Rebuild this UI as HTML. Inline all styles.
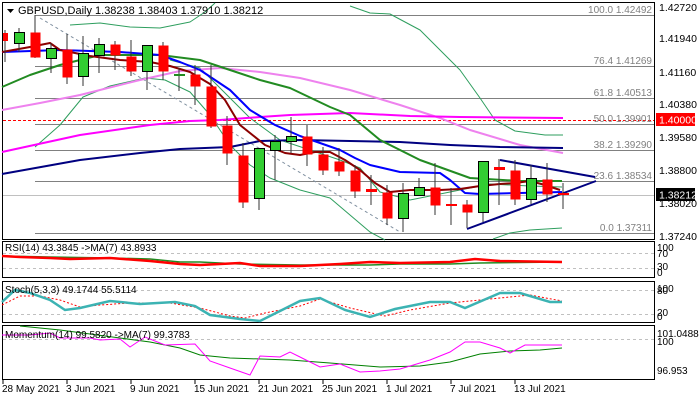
<!DOCTYPE html>
<html><head><meta charset="utf-8"><style>
html,body{margin:0;padding:0;background:#fff;}
svg{display:block;font-family:"Liberation Sans",Tahoma,sans-serif;}
</style></head><body>
<svg width="700" height="400" viewBox="0 0 700 400" xmlns="http://www.w3.org/2000/svg">
<rect width="700" height="400" fill="#fff"/>
<g fill="none" stroke="#000" stroke-width="1">
<rect x="2.5" y="2.5" width="652" height="237"/>
<rect x="2.5" y="241.5" width="652" height="36"/>
<rect x="2.5" y="281.5" width="652" height="41"/>
<rect x="2.5" y="325.5" width="652" height="54"/>
</g>
<g stroke="#808080" stroke-width="1">
<line x1="35" y1="15.5" x2="654" y2="15.5"/>
<line x1="35" y1="66.5" x2="654" y2="66.5"/>
<line x1="35" y1="98.5" x2="654" y2="98.5"/>
<line x1="35" y1="124.5" x2="654" y2="124.5"/>
<line x1="35" y1="150.5" x2="654" y2="150.5"/>
<line x1="35" y1="181.5" x2="654" y2="181.5"/>
<line x1="35" y1="233.5" x2="654" y2="233.5"/>
</g>
<line x1="3" y1="195.5" x2="654" y2="195.5" stroke="#c0c0c0"/>
<line x1="3" y1="120.5" x2="654" y2="120.5" stroke="#f00" stroke-dasharray="3,2"/>
<g font-size="10" fill="#808080" text-anchor="end">
<text x="652" y="13">100.0 1.42492</text>
<text x="652" y="64">76.4 1.41269</text>
<text x="652" y="96">61.8 1.40513</text>
<text x="652" y="122">50.0 1.39901</text>
<text x="652" y="148">38.2 1.39290</text>
<text x="652" y="179">23.6 1.38534</text>
<text x="652" y="231">0.0 1.37311</text>
</g>
<line x1="40" y1="18" x2="400" y2="232" stroke="#8090a0" stroke-dasharray="3,3"/>
<g fill="none" stroke-linejoin="round">
<polyline stroke="#2e9e5e" stroke-width="1" points="70,25 100,23 130,27 160,28 190,22 205,12 215,3"/>
<polyline stroke="#2e9e5e" stroke-width="1" points="350,6 370,13 390,14 420,30 440,50 460,70 480,98 495,120 515,131 545,135 563,135"/>
<polyline stroke="#2e9e5e" stroke-width="1" points="35,147 60,125 83,97 110,86 145,78 165,80 190,92 210,115 230,145 250,165 270,178 300,190 330,198 350,215 370,232 385,240"/>
<polyline stroke="#2e9e5e" stroke-width="1" points="493,239 510,233 530,230 562,228"/>
<polyline stroke="#2e9e5e" stroke-width="1" points="170,60 200,68 220,88 250,118 280,140 310,150 340,160 360,168 380,192 410,200 450,192 490,184 530,186 562,187"/>
<polyline stroke="#ee82ee" stroke-width="2" points="2,110 40,103 80,95 140,80 180,71 220,68 260,72 300,78 350,90 400,105 440,118 470,130 520,145 563,153"/>
<polyline stroke="#ff00ff" stroke-width="2" points="2,152 80,135 150,125 190,121 220,120 260,117 290,115 350,113 410,116 460,117 563,118"/>
<polyline stroke="#000080" stroke-width="2" points="2,174 80,160 140,153 180,149 230,147 260,141 300,140 350,141 400,142 450,145 500,147 563,148"/>
<polyline stroke="#228b22" stroke-width="2" points="2,87 30,75 60,65 100,55 160,55 200,60 230,70 260,80 290,88 330,107 350,115 380,140 420,160 470,178 520,181 562,181"/>
<polyline stroke="#0000ff" stroke-width="2" points="2,52 60,50 120,52 160,55 180,62 200,70 230,90 250,110 275,125 300,136 340,150 355,158 370,165 400,172 440,173 450,180 465,193 480,194 520,193 562,192"/>
<polyline stroke="#8b0000" stroke-width="2" points="2,52 30,47 50,43 60,50 90,56 120,60 150,62 170,66 190,72 210,84 225,100 240,125 265,145 285,153 300,155 315,152 330,152 345,160 360,170 375,183 390,192 410,190 440,190 460,189 480,186 500,184 515,183 530,181 545,185 560,190"/>
<polyline stroke="#000080" stroke-width="2" points="500,160 595,177"/>
<polyline stroke="#000080" stroke-width="2" points="467,229 596,181"/>
</g>
<g stroke="#333" stroke-width="1">
<line x1="5" y1="30" x2="5" y2="62"/><line x1="19" y1="28" x2="19" y2="52"/><line x1="35" y1="15" x2="35" y2="58"/><line x1="51" y1="43" x2="51" y2="73"/><line x1="67" y1="34" x2="67" y2="84"/><line x1="83" y1="36" x2="83" y2="86"/><line x1="99" y1="38" x2="99" y2="73"/><line x1="115" y1="41" x2="115" y2="70"/><line x1="131" y1="40" x2="131" y2="76"/><line x1="147" y1="45" x2="147" y2="90"/><line x1="163" y1="42" x2="163" y2="80"/><line x1="179" y1="68" x2="179" y2="91"/><line x1="195" y1="65" x2="195" y2="105"/><line x1="211" y1="65" x2="211" y2="128"/><line x1="227" y1="116" x2="227" y2="165"/><line x1="243" y1="143" x2="243" y2="208"/><line x1="259" y1="148" x2="259" y2="210"/><line x1="275" y1="135" x2="275" y2="180"/><line x1="291" y1="117" x2="291" y2="153"/><line x1="307" y1="125" x2="307" y2="166"/><line x1="323" y1="147" x2="323" y2="175"/><line x1="339" y1="148" x2="339" y2="176"/><line x1="355" y1="165" x2="355" y2="198"/><line x1="371" y1="175" x2="371" y2="205"/><line x1="387" y1="185" x2="387" y2="225"/><line x1="403" y1="183" x2="403" y2="232"/><line x1="419" y1="178" x2="419" y2="196"/><line x1="435" y1="163" x2="435" y2="215"/><line x1="451" y1="188" x2="451" y2="225"/><line x1="467" y1="200" x2="467" y2="228"/><line x1="483" y1="161" x2="483" y2="222"/><line x1="499" y1="159" x2="499" y2="205"/><line x1="515" y1="160" x2="515" y2="205"/><line x1="531" y1="165" x2="531" y2="204"/><line x1="547" y1="163" x2="547" y2="202"/><line x1="563" y1="183" x2="563" y2="209"/>
</g>
<g stroke="#000" stroke-width="1">
<rect x="3" y="33" width="5" height="8" fill="#f00" stroke="none"/>
<rect x="14.5" y="32.5" width="10" height="11" fill="#32cd32"/>
<rect x="30.5" y="32.5" width="10" height="25" fill="#f00" stroke="none"/>
<rect x="46.5" y="48.5" width="10" height="10" fill="#32cd32"/>
<rect x="62.5" y="49.5" width="10" height="28" fill="#f00" stroke="none"/>
<rect x="78.5" y="53.5" width="10" height="23" fill="#32cd32"/>
<rect x="94.5" y="44.5" width="10" height="11" fill="#32cd32"/>
<rect x="110.5" y="44.5" width="10" height="11" fill="#f00" stroke="none"/>
<rect x="126.5" y="56.5" width="10" height="15" fill="#f00" stroke="none"/>
<rect x="142.5" y="45.5" width="10" height="26" fill="#32cd32"/>
<rect x="158.5" y="45.5" width="10" height="26" fill="#f00" stroke="none"/>
<rect x="174" y="74" width="11" height="2" fill="#228b22" stroke="none"/>
<rect x="190.5" y="74.5" width="10" height="12" fill="#f00" stroke="none"/>
<rect x="206.5" y="86.5" width="10" height="40" fill="#f00" stroke="none"/>
<rect x="222.5" y="125.5" width="10" height="28" fill="#f00" stroke="none"/>
<rect x="238.5" y="155.5" width="10" height="47" fill="#f00" stroke="none"/>
<rect x="254.5" y="148.5" width="10" height="50" fill="#32cd32"/>
<rect x="270.5" y="141.5" width="10" height="9" fill="#32cd32"/>
<rect x="286.5" y="136.5" width="10" height="5" fill="#32cd32"/>
<rect x="302.5" y="136.5" width="10" height="18" fill="#f00" stroke="none"/>
<rect x="318.5" y="154.5" width="10" height="16" fill="#f00" stroke="none"/>
<rect x="334.5" y="161.5" width="10" height="10" fill="#f00" stroke="none"/>
<rect x="350.5" y="170.5" width="10" height="21" fill="#f00" stroke="none"/>
<rect x="366" y="189" width="11" height="3" fill="#f00" stroke="none"/>
<rect x="382.5" y="192.5" width="10" height="26" fill="#f00" stroke="none"/>
<rect x="398.5" y="193.5" width="10" height="25" fill="#32cd32"/>
<rect x="414.5" y="187.5" width="10" height="8" fill="#32cd32"/>
<rect x="430.5" y="187.5" width="10" height="18" fill="#f00" stroke="none"/>
<rect x="446" y="204" width="11" height="2" fill="#f00" stroke="none"/>
<rect x="462.5" y="204.5" width="10" height="8" fill="#f00" stroke="none"/>
<rect x="478.5" y="161.5" width="10" height="51" fill="#32cd32"/>
<rect x="494" y="167" width="11" height="3" fill="#f00" stroke="none"/>
<rect x="510.5" y="170.5" width="10" height="29" fill="#f00" stroke="none"/>
<rect x="526.5" y="178.5" width="10" height="21" fill="#32cd32"/>
<rect x="542.5" y="179.5" width="10" height="15" fill="#f00" stroke="none"/>
<rect x="558" y="193" width="11" height="2" fill="#f00" stroke="none"/>
</g>
<path d="M7,9 L14,9 L10.5,13 Z" fill="#000"/>
<text x="18" y="14" font-size="11" fill="#000">GBPUSD,Daily  1.38238 1.38403 1.37910 1.38212</text>
<g font-size="10.5" fill="#000">
<text x="659" y="11">1.42720</text>
<text x="659" y="42">1.41940</text>
<text x="659" y="76">1.41160</text>
<text x="659" y="108">1.40380</text>
<text x="659" y="141">1.39580</text>
<text x="659" y="174">1.38800</text>
<text x="659" y="207">1.38020</text>
<text x="659" y="240">1.37240</text>
</g>
<rect x="656" y="113" width="39" height="13" fill="#f00"/>
<text x="659" y="123.5" font-size="10.5" fill="#fff">1.40000</text>
<rect x="656" y="188" width="39" height="13" fill="#000"/>
<text x="659" y="198.5" font-size="10.5" fill="#fff">1.38212</text>
<g stroke="#c0c0c0" stroke-dasharray="3,3"><line x1="3" y1="253.5" x2="654" y2="253.5"/><line x1="3" y1="268.5" x2="654" y2="268.5"/>
<line x1="3" y1="290.5" x2="654" y2="290.5"/><line x1="3" y1="314.5" x2="654" y2="314.5"/><line x1="3" y1="339.5" x2="654" y2="339.5"/></g>
<polyline fill="none" stroke="#228b22" stroke-width="1.5" points="2,256 50,257 110,258 150,259 180,262 200,262 240,264 300,265 340,265 370,265 400,264 450,264 480,263 562,262"/>
<polyline fill="none" stroke="#f00" stroke-width="2.5" points="2,256 20,257 50,258 70,259 110,258 150,261 180,264 200,265 240,263 260,266 300,266 340,264 370,262 400,263 450,262 475,259 500,261 562,262"/>
<text x="5" y="251" font-size="10" fill="#000">RSI(14) 43.3845  -&gt;MA(7) 43.8933</text>
<polyline fill="none" stroke="#f00" stroke-width="1" stroke-dasharray="2,2" points="2,305 20,296 40,296 60,300 80,307 100,305 130,303 170,303 200,308 230,316 245,318 265,313 300,306 320,299 350,308 385,316 410,310 450,303 490,299 530,295 562,301"/>
<polyline fill="none" stroke="#3cb3b3" stroke-width="2.5" points="2,302 15,290 30,293 50,300 65,310 80,308 110,301 140,304 175,302 195,306 210,315 240,319 260,321 280,311 300,301 320,298 345,310 370,317 395,309 430,302 450,302 465,308 500,293 520,293 550,302 562,302"/>
<text x="5" y="293" font-size="10" fill="#000">Stoch(5,3,3) 49.1744 55.5114</text>
<polyline fill="none" stroke="#008000" stroke-width="1" points="20,326 60,330 120,338 150,342 180,348 200,355 230,358 290,360 330,363 380,367 420,366 450,362 480,354 510,351 540,350 562,348"/>
<polyline fill="none" stroke="#ff00ff" stroke-width="1" points="2,335 30,335 50,333 60,338 90,338 100,340 120,339 130,347 145,337 165,345 195,344 210,361 230,368 250,375 260,356 280,357 290,352 300,357 320,367 340,364 360,372 380,371 400,369 430,360 450,352 465,342 480,342 500,348 510,353 525,345 562,345"/>
<text x="5" y="338" font-size="10" fill="#000">Momentum(14) 99.5820  -&gt;MA(7) 99.3783</text>
<g font-size="10" fill="#000">
<text x="657" y="251">100</text><text x="657" y="257">70</text><text x="657" y="270">30</text><text x="657" y="276">0</text>
<text x="657" y="292">100</text><text x="657" y="294">80</text><text x="657" y="316">20</text><text x="657" y="320">0</text>
<text x="657" y="337">101.0488</text><text x="657" y="345">100</text><text x="657" y="374">96.953</text>
</g>
<g font-size="10" fill="#000">
<text x="2" y="392">28 May 2021</text>
<text x="66" y="392">3 Jun 2021</text>
<text x="130" y="392">9 Jun 2021</text>
<text x="194" y="392">15 Jun 2021</text>
<text x="258" y="392">21 Jun 2021</text>
<text x="322" y="392">25 Jun 2021</text>
<text x="386" y="392">1 Jul 2021</text>
<text x="450" y="392">7 Jul 2021</text>
<text x="514" y="392">13 Jul 2021</text>
</g>
<g stroke="#000"><line x1="3" y1="380" x2="3" y2="384"/><line x1="67" y1="380" x2="67" y2="384"/><line x1="131" y1="380" x2="131" y2="384"/><line x1="195" y1="380" x2="195" y2="384"/><line x1="259" y1="380" x2="259" y2="384"/><line x1="323" y1="380" x2="323" y2="384"/><line x1="387" y1="380" x2="387" y2="384"/><line x1="451" y1="380" x2="451" y2="384"/><line x1="515" y1="380" x2="515" y2="384"/></g>
</svg>
</body></html>
